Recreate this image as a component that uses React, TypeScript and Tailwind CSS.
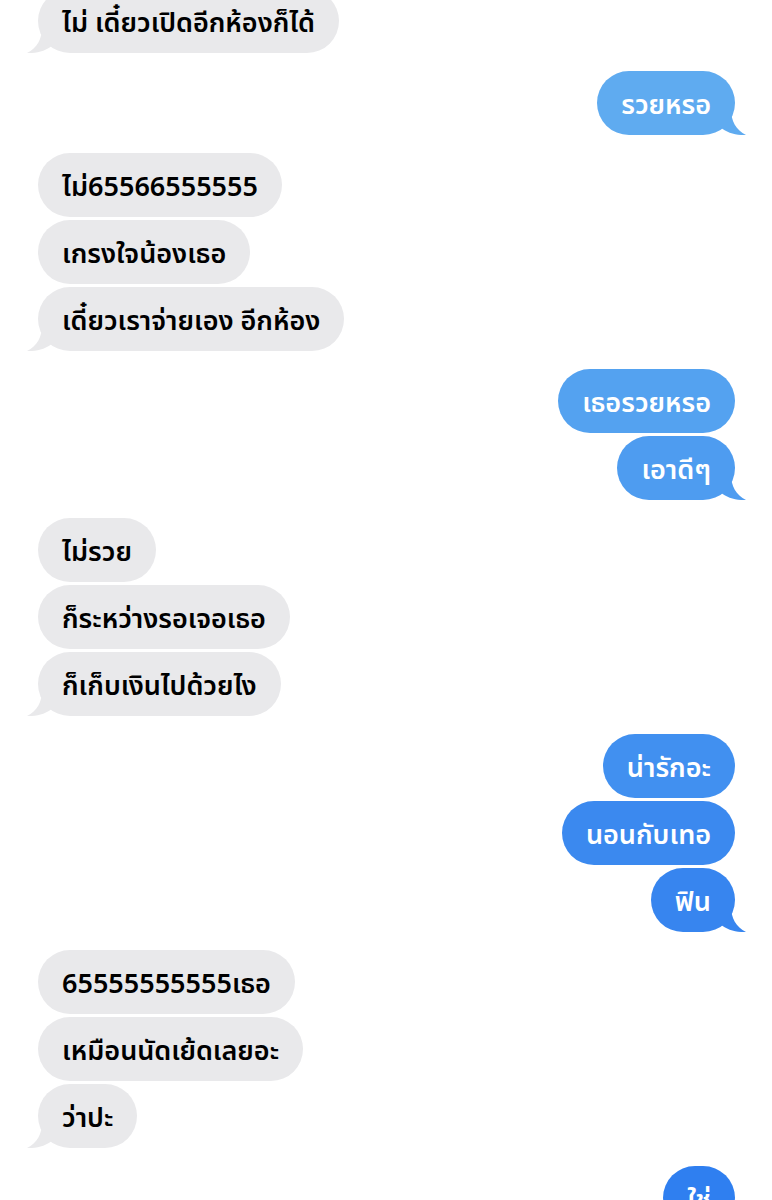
const MESSAGES = [
  { from: "them", text: "ไม่ เดี๋ยวเปิดอีกห้องก็ได้", tail: true },
  { from: "me", text: "รวยหรอ", tail: true, bg: "bg-[#5fabf0]" },
  { from: "them", text: "ไม่65566555555" },
  { from: "them", text: "เกรงใจน้องเธอ" },
  { from: "them", text: "เดี๋ยวเราจ่ายเอง อีกห้อง", tail: true },
  { from: "me", text: "เธอรวยหรอ", bg: "bg-[#54a2f0]" },
  { from: "me", text: "เอาดีๆ", tail: true, bg: "bg-[#4e9cf0]" },
  { from: "them", text: "ไม่รวย" },
  { from: "them", text: "ก็ระหว่างรอเจอเธอ" },
  { from: "them", text: "ก็เก็บเงินไปด้วยไง", tail: true },
  { from: "me", text: "น่ารักอะ", bg: "bg-[#4190f0]" },
  { from: "me", text: "นอนกับเทอ", bg: "bg-[#3b89ef]" },
  { from: "me", text: "ฟิน", tail: true, bg: "bg-[#3785ef]" },
  { from: "them", text: "65555555555เธอ" },
  { from: "them", text: "เหมือนนัดเย้ดเลยอะ" },
  { from: "them", text: "ว่าปะ", tail: true },
  { from: "me", text: "ใช่", bg: "bg-[#2f7ff0]" },
];

function Tail({ side, color }: { side: "left" | "right"; color: string }) {
  if (side === "left") {
    return (
      <svg
        className="absolute bottom-0 -left-[11px] h-[26px] w-[28px]"
        viewBox="0 0 28 26"
        fill={color}
      >
        <path d="M15 0 C15 12 10 21 0 26 C10 26.5 19 24 26 18 L26 0 Z" />
      </svg>
    );
  }
  return (
    <svg
      className="absolute bottom-0 -right-[11px] h-[26px] w-[28px]"
      viewBox="0 0 28 26"
      fill={color}
    >
      <path d="M13 0 C13 12 18 21 28 26 C18 26.5 9 24 2 18 L2 0 Z" />
    </svg>
  );
}

export default function App() {
  return (
    <main
      className="min-h-[1200px] w-full overflow-hidden bg-white px-[37px]"
      style={{ fontFamily: '"Noto Sans", "Noto Sans Thai", sans-serif' }}
    >
      <div className="-mt-[11px] flex flex-col">
        {MESSAGES.map((m, i) => {
          const prev = MESSAGES[i - 1];
          const newGroup = prev && prev.from !== m.from;
          const mine = m.from === "me";
          const tailColor = mine ? m.bg!.slice(4, -1) : "#e9e9eb";
          return (
            <div
              key={i}
              className={`flex ${mine ? "justify-end" : "justify-start pl-px"} ${
                i === 0 ? "" : newGroup ? "mt-[18px]" : "mt-[3px]"
              }`}
            >
              <div
                className={`relative flex h-16 items-center rounded-full px-6 text-[27px] font-semibold leading-none ${
                  mine ? `${m.bg} text-white` : "bg-[#e9e9eb] text-black"
                }`}
              >
                {m.tail && <Tail side={mine ? "right" : "left"} color={tailColor} />}
                <span className="relative whitespace-nowrap">{m.text}</span>
              </div>
            </div>
          );
        })}
      </div>
    </main>
  );
}
